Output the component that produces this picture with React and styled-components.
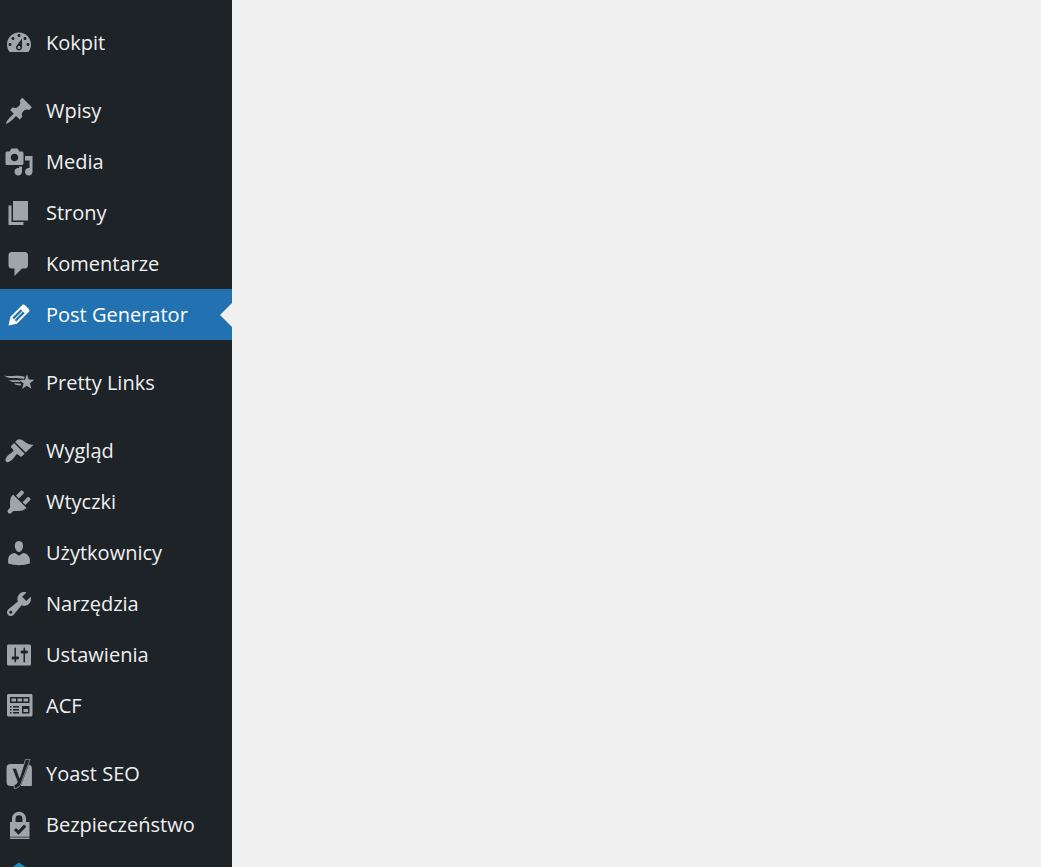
import styled, { createGlobalStyle } from "styled-components";

const GlobalStyle = createGlobalStyle`
  body {
    margin: 0;
    background: #f0f0f1;
    font-family: "Open Sans", "Noto Sans", sans-serif;
  }
`;

const Layout = styled.div`
  display: flex;
  height: 100vh;
  overflow: hidden;
`;

const Sidebar = styled.nav`
  width: 232px;
  flex-shrink: 0;
  padding-top: 17px;
  box-sizing: border-box;
  background: #1d2327;
`;

const Content = styled.main`
  flex: 1;
  background: #f0f0f0;
`;

const Group = styled.ul`
  list-style: none;
  margin: 0 0 17px;
  padding: 0;
`;

const MenuLink = styled.a`
  position: relative;
  display: flex;
  align-items: center;
  gap: 12px;
  height: 51px;
  padding-left: 4px;
  font-size: 20px;
  line-height: 28px;
  white-space: nowrap;
  text-decoration: none;
  color: ${(props) => (props.$active ? "#fff" : "#f0f0f1")};
  background: ${(props) => (props.$active ? "#2271b1" : "transparent")};
`;

const Arrow = styled.span`
  position: absolute;
  right: 0;
  border: 12px solid transparent;
  border-left-width: 0;
  border-right-color: #f0f0f0;
`;

const Icon = styled.svg`
  width: 30px;
  height: 30px;
  flex-shrink: 0;
  fill: ${(props) => props.$color || "#a0a5aa"};
  fill-rule: evenodd;
`;

const icons = {
  dashboard: (
    <path d="M3.76 16h12.48c1.1-1.37 1.76-3.11 1.76-5 0-4.42-3.58-8-8-8s-8 3.58-8 8c0 1.89.66 3.63 1.76 5zM10 4c.55 0 1 .45 1 1s-.45 1-1 1-1-.45-1-1 .45-1 1-1zM6 6c.55 0 1 .45 1 1s-.45 1-1 1-1-.45-1-1 .45-1 1-1zm8 0c.55 0 1 .45 1 1s-.45 1-1 1-1-.45-1-1 .45-1 1-1zm-5.37 5.55L12 7v6c0 1.1-.9 2-2 2s-2-.9-2-2c0-.57.24-1.08.63-1.45zM4 10c.55 0 1 .45 1 1s-.45 1-1 1-1-.45-1-1 .45-1 1-1zm12 0c.55 0 1 .45 1 1s-.45 1-1 1-1-.45-1-1 .45-1 1-1zm-5 3c0-.55-.45-1-1-1s-1 .45-1 1 .45 1 1 1 1-.45 1-1z" />
  ),
  pin: (
    <path d="M10.44 3.02l1.82-1.82 6.36 6.35-1.83 1.82c-1.05-.68-2.48-.57-3.41.36l-.75.75c-.92.93-1.04 2.35-.35 3.41l-1.83 1.82-2.41-2.41-2.8 2.79c-.42.42-3.38 2.71-3.8 2.29s1.86-3.39 2.28-3.81l2.79-2.79L4.1 9.36l1.83-1.82c1.05.69 2.48.57 3.4-.36l.75-.75c.93-.92 1.05-2.35.36-3.41z" />
  ),
  media: (
    <path d="M13 11V4c0-.55-.45-1-1-1h-1.67L9 1H5L3.67 3H2c-.55 0-1 .45-1 1v7c0 .55.45 1 1 1h10c.55 0 1-.45 1-1zM7 4.5c1.38 0 2.5 1.12 2.5 2.5S8.38 9.5 7 9.5 4.5 8.38 4.5 7 5.62 4.5 7 4.5zM14 6h5v10.5c0 1.38-1.12 2.5-2.5 2.5S14 17.88 14 16.5s1.12-2.5 2.5-2.5c.17 0 .34.02.5.05V9h-3V6zm-4 8.05V13h2v3.5c0 1.38-1.12 2.5-2.5 2.5S7 17.88 7 16.5 8.12 14 9.5 14c.17 0 .34.02.5.05z" />
  ),
  page: <path d="M6 15V2h10v13H6zm-1 1h8v2H3V5h2v11z" />,
  comment: (
    <path d="M5 2h9c1.1 0 2 .9 2 2v7c0 1.1-.9 2-2 2h-2l-5 5v-5H5c-1.1 0-2-.9-2-2V4c0-1.1.9-2 2-2z" />
  ),
  edit: (
    <path d="M13.89 3.39l2.71 2.72c.46.46.42 1.24.03 1.64l-8.01 8.02-5.56 1.16 1.16-5.58s7.6-7.63 7.99-8.03c.39-.39 1.22-.39 1.68.07zm-2.73 2.79l-5.59 5.61 1.11 1.11 5.54-5.65zm-2.97 8.23l5.58-5.6-1.07-1.08-5.59 5.6z" />
  ),
  star: (
    <>
      <path d="M15.3 4.2l1.2 3.5 3.7.2-2.9 2.3.9 3.7-3.1-2-3.1 2.1 1.1-3.6-2.8-2.4 3.7-.1z" />
      <path d="M0 5c4 1 8.500-.8 13.800.9l-.5 1.400C8.500 6.200 3.500 8 0 5z" />
      <path d="M3.200 8c2.200.4 4.500-.1 6.800.2l1.200 1.200C8.500 9 5.300 10.100 3.200 8z" />
      <path d="M6.600 10.200c1.500.2 3-.1 4.900.3l-.4 1.200c-1.800-.3-3.400 0-4.500-1.500z" />
    </>
  ),
  brush: (
    <path d="M14.48 11.06L7.41 3.99l1.5-1.5c.5-.56 2.3-.47 3.51.32 1.21.8 1.43 1.28 2.91 2.1 1.18.64 2.45 1.26 4.45.85zm-.71.71L6.7 4.7 4.93 6.47c-.39.39-.39 1.02 0 1.41l1.06 1.06c.39.39.39 1.03 0 1.42-.6.6-1.43 1.11-2.21 1.69-.35.26-.7.53-1.01.84C1.43 14.23.4 16.08 1.4 17.07c.99 1 2.84-.03 4.18-1.36.31-.31.58-.66.85-1.02.57-.78 1.08-1.61 1.69-2.21.39-.39 1.02-.39 1.41 0l1.06 1.06c.39.39 1.02.39 1.41 0z" />
  ),
  plug: (
    <path d="M13.11 4.36L9.87 7.6 8 5.73l3.24-3.24c.35-.34 1.05-.2 1.56.32.52.51.66 1.21.31 1.55zm-8 1.77l.91-1.12 9.01 9.01-1.19.84c-.71.71-2.63 1.16-3.82 1.16H6.14L4.9 17.26c-.59.59-1.54.59-2.12 0-.59-.58-.59-1.53 0-2.12l1.24-1.24v-3.88c0-1.13.4-3.19 1.09-3.89zm7.26 3.97l3.24-3.24c.34-.35 1.04-.21 1.55.31.52.51.66 1.21.31 1.55l-3.24 3.25z" />
  ),
  user: (
    <path d="M10 9.25c-2.27 0-2.73-3.44-2.73-3.44C7 4.02 7.82 2 9.97 2c2.16 0 2.98 2.02 2.71 3.81 0 0-.41 3.44-2.68 3.44zm0 2.57L12.72 10c2.39 0 4.52 2.33 4.52 4.53v2.49s-3.65 1.13-7.24 1.13c-3.65 0-7.24-1.13-7.24-1.13v-2.49c0-2.25 1.94-4.48 4.47-4.48z" />
  ),
  wrench: (
    <path d="M16.68 9.77c-1.34 1.34-3.3 1.67-4.95.99l-5.41 6.52c-.99.99-2.59.99-3.58 0s-.99-2.59 0-3.57l6.52-5.42c-.68-1.65-.35-3.61.99-4.95 1.28-1.28 3.12-1.62 4.72-1.06l-2.89 2.89 2.82 2.82 2.86-2.87c.53 1.58.18 3.39-1.08 4.65zM3.81 16.21c.4.39 1.04.39 1.43 0 .4-.4.4-1.04 0-1.43-.39-.4-1.03-.4-1.43 0-.39.39-.39 1.03 0 1.43z" />
  ),
  settings: (
    <path d="M18 16V4c0-.55-.45-1-1-1H3c-.55 0-1 .45-1 1v12c0 .55.45 1 1 1h14c.55 0 1-.45 1-1zM8 11h1c.55 0 1 .45 1 1s-.45 1-1 1H8v1.5c0 .28-.22.5-.5.5s-.5-.22-.5-.5V13H6c-.55 0-1-.45-1-1s.45-1 1-1h1V5.5c0-.28.22-.5.5-.5s.5.22.5.5V11zm5-2h-1c-.55 0-1-.45-1-1s.45-1 1-1h1V5.5c0-.28.22-.5.5-.5s.5.22.5.5V7h1c.55 0 1 .45 1 1s-.45 1-1 1h-1v5.500c0 .28-.22.5-.5.5s-.5-.22-.5-.5V9z" />
  ),
  widgets: (
    <path d="M19 16V3c0-.55-.45-1-1-1H3c-.55 0-1 .45-1 1v13c0 .55.45 1 1 1h15c.55 0 1-.45 1-1zM4 4h13v4H4V4zm1 1v2h3V5H5zm4 0v2h3V5H9zm4 0v2h3V5h-3zM4 10h1v1H4zm2 0h4v1H6zm6 0h5v5h-5zm1 2v2h3v-2zM4 12h1v1H4zm2 0h4v1H6zM4 14h1v1H4zm2 0h4v1H6z" />
  ),
  yoast: (
    <>
      <path d="M4.300 3.400h9.900L9 18H4.300a2.600 2.600 0 0 1-2.600-2.600V6a2.600 2.600 0 0 1 2.600-2.600zM16.600 3.600c1.200.4 2 1.300 2 2.500V18h-7.400z" />
      <path
        d="M14.400.2h3l-5.900 15.700c-.9 2.500-2.300 3.800-4.700 3.800v-2.600c1.300-.2 1.900-.9 2.100-1.900L5.400 6.200h2.800l2.200 6.300z"
        fill="#1d2327"
        stroke="#a0a5aa"
        strokeWidth=".5"
      />
    </>
  ),
  lock: (
    <>
      <path d="M5.300 8V5.800a4.700 4.700 0 0 1 9.400 0V8h-2.400V5.800a2.300 2.300 0 0 0-4.600 0V8z" />
      <path d="M4 8h13v9.800H4zM4 18.300h13v1H4z" />
      <path d="M7.300 12.700l2.400 2.400 4.400-4.700" fill="none" stroke="#1d2327" strokeWidth="2" />
    </>
  ),
  shield: <path d="M10 1l7 5v9l-7 4-7-4V6z" />,
};

const menu = [
  [{ label: "Kokpit", icon: "dashboard" }],
  [
    { label: "Wpisy", icon: "pin" },
    { label: "Media", icon: "media" },
    { label: "Strony", icon: "page" },
    { label: "Komentarze", icon: "comment" },
    { label: "Post Generator", icon: "edit", active: true },
  ],
  [{ label: "Pretty Links", icon: "star" }],
  [
    { label: "Wygląd", icon: "brush" },
    { label: "Wtyczki", icon: "plug" },
    { label: "Użytkownicy", icon: "user" },
    { label: "Narzędzia", icon: "wrench" },
    { label: "Ustawienia", icon: "settings" },
    { label: "ACF", icon: "widgets" },
  ],
  [
    { label: "Yoast SEO", icon: "yoast" },
    { label: "Bezpieczeństwo", icon: "lock" },
    { icon: "shield", color: "#1e8cbe" },
  ],
];

const MenuItem = ({ label, icon, active, color }) => (
  <li>
    <MenuLink href="#" $active={active} aria-current={active ? "page" : undefined}>
      <Icon viewBox="0 0 20 20" $color={active ? "#fff" : color} aria-hidden="true">
        {icons[icon]}
      </Icon>
      {label}
      {active && <Arrow />}
    </MenuLink>
  </li>
);

const App = () => {
  return (
    <>
      <GlobalStyle />
      <Layout>
        <Sidebar>
          {menu.map((items, i) => (
            <Group key={i}>
              {items.map((item) => (
                <MenuItem key={item.icon} {...item} />
              ))}
            </Group>
          ))}
        </Sidebar>
        <Content />
      </Layout>
    </>
  );
};

export default App;
